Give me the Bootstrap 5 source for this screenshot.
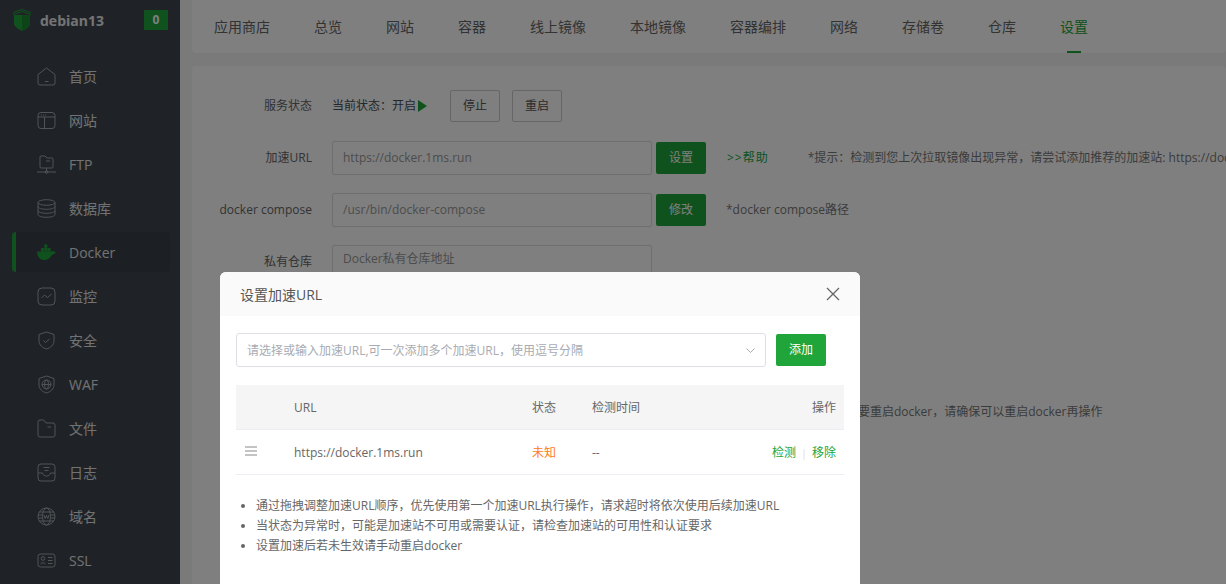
<!DOCTYPE html>
<html lang="zh-CN">
<head>
    <meta charset="UTF-8">
    <meta name="viewport" content="width=device-width, initial-scale=1">
    <title>Docker | debian13</title>
    <link href="https://cdn.jsdelivr.net/npm/bootstrap@5.3.0/dist/css/bootstrap.min.css" rel="stylesheet">
    <style>
        body {
            font-family: "Open Sans", "Noto Sans CJK SC", sans-serif;
            font-size: 12px;
            color: #555;
            background: #f5f5f5;
            overflow: hidden;
        }
        .app-wrap { height: 100vh; overflow: hidden; }
        .side-bar { width: 180px; background: #3e464e; color: #eee; }
        .side-head { height: 40px; margin-bottom: 16px; padding: 0 12px; }
        .side-name { font-weight: 700; font-size: 14px; color: #e8e8e8; }
        .side-badge {
            width: 24px; height: 20px; background: #20a53a; color: #fff; font-size: 12px;
            font-weight: 700; border-radius: 1px; line-height: 20px; text-align: center;
        }
        .side-item {
            height: 40px; margin: 0 10px 4px 12px; padding-left: 25px; gap: 13px;
            font-size: 14px; color: #e4e4e4; border-radius: 4px;
        }
        .side-item svg { width: 19px; height: 19px; fill: none; stroke: #a4a8ac; stroke-width: 1; flex-shrink: 0; }
        .side-item.on { background: #383f46; border-left: 4px solid #20a53a; padding-left: 21px; }
        .main-area { padding: 0 0 0 12px; min-width: 0; }
        .tab-strip { height: 53px; background: #fff; padding-left: 22px; gap: 44px; border-radius: 0 0 4px 4px; font-size: 14px; }
        .tab-link { position: relative; line-height: 53px; color: #666; white-space: nowrap; text-decoration: none; }
        .tab-link.on { color: #20a53a; }
        .tab-link.on::after {
            content: ""; position: absolute; left: 7px; bottom: 0; width: 14px; height: 2px; background: #20a53a;
        }
        .set-card { margin-top: 13px; background: #fff; border-radius: 4px; padding-top: 14px; height: 600px; }
        .set-row { height: 52px; white-space: nowrap; }
        .set-gap { height: 98px; }
        .set-row > * { flex-shrink: 0; }
        .set-label { width: 120px; text-align: right; margin-right: 20px; color: #666; }
        .set-input {
            width: 320px; height: 34px; border: 1px solid #ddd; border-radius: 2px; padding: 0 10px; color: #999;
            line-height: 32px; background: #fff;
        }
        .set-input-high { line-height: 26px; }
        .line-btn { width: 50px; height: 32px; padding: 0; border: 1px solid #ccc; border-radius: 2px; background: #fff; color: #555; font-size: 12px; }
        .stop-btn { margin-left: 23px; }
        .restart-btn { margin-left: 12px; }
        .fill-btn { width: 50px; height: 32px; background: #20a53a; color: #fff; border: 0; border-radius: 2px; font-size: 12px; padding: 0; }
        .help-link { color: #20a53a; text-decoration: none; font-size: 12px; margin-left: 21px; letter-spacing: 1px; }
        .note-text { color: #777; margin-left: 20px; font-size: 12px; }
        .note-hint { margin-left: 39px; }
        .note-far { margin-left: 666px; }
        .play-mark {
            display: inline-block; border-left: 9px solid #20a53a; border-top: 6px solid transparent; border-bottom: 6px solid transparent;
            vertical-align: -2px; margin-left: 2px;
        }
        .dim-layer { position: absolute; inset: 0; background: rgba(0, 0, 0, .5); }
        .url-dialog {
            position: absolute; left: 220px; top: 272px; width: 640px; height: 400px; background: #fff; border-radius: 6px; overflow: hidden;
        }
        .dialog-head { height: 44px; background: #fafafa; padding: 0 20px; font-size: 14px; color: #555; }
        .dialog-close { background: none; border: 0; padding: 0; line-height: 0; }
        .dialog-body { padding: 17px 16px; }
        .url-select {
            width: 530px; height: 34px; border: 1px solid #dcdfe6; border-radius: 3px; padding: 1px 10px 0; color: #a8abb2; font-size: 12px;
        }
        .add-btn { width: 50px; height: 32px; margin-left: 10px; background: #20a53a; color: #fff; border: 0; border-radius: 2px; font-size: 12px; padding: 0; }
        .url-table { width: 608px; margin: 18px 0 0; font-size: 12px; color: #666; border-collapse: collapse; table-layout: fixed; }
        .url-table th { height: 44px; background: #f5f5f5; font-weight: 400; padding: 2px 8px 0; border-bottom: 1px solid #ebeef5; }
        .url-table td { height: 45px; padding: 2px 8px 0; border-bottom: 1px solid #ebeef5; }
        .warn-text { color: #ff7a1a; }
        .act-link { color: #20a53a; text-decoration: none; font-size: 12px; }
        .act-sep { color: #ddd; margin: 0 5px; font-size: 11px; }
        .tip-list { margin: 21px 0 0; padding-left: 20px; font-size: 12px; line-height: 20px; color: #666; }
    </style>
</head>
<body>

<div class="app-wrap d-flex position-relative">
    <aside class="side-bar flex-shrink-0">
        <div class="side-head d-flex align-items-center">
            <svg width="20" height="22" viewBox="0 0 20 22" class="me-2">
                <path d="M2 6h16v9c0 2-3 4.500-8 7-5-2.500-8-5-8-7z" fill="#20a53a"/>
                <path d="M10 6h8v9c0 2-3 4.500-8 7z" fill="#1a8a30"/>
                <path d="M1 3.500 10 .5l9 3M1 5.500l9-3 9 3" fill="none" stroke="#20a53a"/>
            </svg>
            <span class="side-name flex-grow-1">debian13</span>
            <span class="side-badge">0</span>
        </div>
        <div class="side-item d-flex align-items-center">
            <svg viewBox="0 0 19 19"><path d="M1 7.500 9.500 1 18 7.500V16a2 2 0 0 1-2 2H3a2 2 0 0 1-2-2zM8 14.500h3.500"/></svg>首页
        </div>
        <div class="side-item d-flex align-items-center">
            <svg viewBox="0 0 19 19"><rect x="1" y="1.500" width="17" height="16" rx="3"/><path d="M1 6h17M7.500 6v11.500M4 4h1M6 4h1M8 4h1"/></svg>网站
        </div>
        <div class="side-item d-flex align-items-center">
            <svg viewBox="0 0 19 19"><path d="M3 12V2a1 1 0 0 1 1-1h4l2 2h5a1 1 0 0 1 1 1v8a1 1 0 0 1-1 1H4a1 1 0 0 1-1-1zM9 6h4M0 17h19M9.500 13v3"/><circle cx="9.500" cy="17" r="1.300"/></svg>FTP
        </div>
        <div class="side-item d-flex align-items-center">
            <svg viewBox="0 0 19 19"><ellipse cx="9.500" cy="3.500" rx="8.500" ry="2.800"/><path d="M1 3.500v12c0 1.600 3.800 2.800 8.500 2.800s8.500-1.200 8.500-2.800v-12M1 7.500c0 1.600 3.800 2.800 8.500 2.800s8.500-1.200 8.500-2.800M1 11.500c0 1.600 3.800 2.800 8.500 2.800s8.500-1.200 8.500-2.800"/></svg>数据库
        </div>
        <div class="side-item on d-flex align-items-center">
            <svg viewBox="0 0 19 19" style="stroke:none"><path d="M0 8.500h14c1-.5 3-.5 5 1-1.500 1.500-2.800 2-4 2.200-2 3.800-4.500 5.300-7.500 5.300C3 17 .3 14 0 8.500z" fill="#20a53a"/><path d="M4 5h3v3.500H4zM7.300 5h3v3.500h-3zM7.300 1.500h3v3.200h-3zM10.600 5h3v3.500h-3z" fill="#20a53a"/></svg>Docker
        </div>
        <div class="side-item d-flex align-items-center">
            <svg viewBox="0 0 19 19"><rect x="1" y="1" width="17" height="17" rx="4"/><path d="M4.500 11l3-3 3 2.500 4-3.500"/></svg>监控
        </div>
        <div class="side-item d-flex align-items-center">
            <svg viewBox="0 0 19 19"><path d="M9.500 1 17 3.500V10c0 4-3.500 6.800-7.500 8C5.500 16.800 2 14 2 10V3.500zM6.500 9.500l2 2 4-3.500"/></svg>安全
        </div>
        <div class="side-item d-flex align-items-center">
            <svg viewBox="0 0 19 19"><path d="M9.500 1 17 3.500V10c0 4-3.500 6.800-7.500 8C5.500 16.800 2 14 2 10V3.500z"/><circle cx="9.500" cy="9.500" r="4.500"/><ellipse cx="9.500" cy="9.500" rx="2" ry="4.500"/><path d="M5 9.500h9"/></svg>WAF
        </div>
        <div class="side-item d-flex align-items-center">
            <svg viewBox="0 0 19 19"><path d="M1 3a2 2 0 0 1 2-2h3.500l2.500 3h7a2 2 0 0 1 2 2v10a2 2 0 0 1-2 2H3a2 2 0 0 1-2-2zM10.500 8H14"/></svg>文件
        </div>
        <div class="side-item d-flex align-items-center">
            <svg viewBox="0 0 19 19"><rect x="1" y="1" width="17" height="17" rx="3"/><path d="M1 10h4.500c.5 2 2 3 4 3s3.500-1 4-3H18M6.500 4.500h6M7.500 7.500h4"/></svg>日志
        </div>
        <div class="side-item d-flex align-items-center">
            <svg viewBox="0 0 19 19"><circle cx="9.500" cy="9.500" r="8.500"/><ellipse cx="9.500" cy="9.500" rx="4" ry="8.500"/><path d="M2 5h15M2 14h15M1 8h4M14 8h4M1 11h4M14 11h4"/><path d="M7 8l1.200 3.500 1.300-3 1.300 3L12 8"/></svg>域名
        </div>
        <div class="side-item d-flex align-items-center">
            <svg viewBox="0 0 19 19"><rect x="1" y="3" width="17" height="13" rx="2.500"/><circle cx="6" cy="7.500" r="1.800"/><path d="M3.500 13c.5-1.500 4.500-1.500 5 0M11 6.500h4.500M11 9.500h4.500M11 12.500h4.500"/></svg>SSL
        </div>
    </aside>

    <main class="main-area flex-grow-1">
        <div class="tab-strip d-flex">
            <a class="tab-link">应用商店</a>
            <a class="tab-link">总览</a>
            <a class="tab-link">网站</a>
            <a class="tab-link">容器</a>
            <a class="tab-link">线上镜像</a>
            <a class="tab-link">本地镜像</a>
            <a class="tab-link">容器编排</a>
            <a class="tab-link">网络</a>
            <a class="tab-link">存储卷</a>
            <a class="tab-link">仓库</a>
            <a class="tab-link on">设置</a>
        </div>
        <div class="set-card">
            <div class="set-row d-flex align-items-center">
                <div class="set-label">服务状态</div>
                <span class="text-dark-emphasis">当前状态：开启<i class="play-mark"></i></span>
                <button class="line-btn stop-btn">停止</button>
                <button class="line-btn restart-btn">重启</button>
            </div>
            <div class="set-row d-flex align-items-center">
                <div class="set-label">加速URL</div>
                <div class="set-input">https://docker.1ms.run</div>
                <button class="fill-btn ms-1">设置</button>
                <a class="help-link">&gt;&gt;帮助</a>
                <span class="note-text note-hint">*提示：检测到您上次拉取镜像出现异常，请尝试添加推荐的加速站: https://docker.1ms.run</span>
            </div>
            <div class="set-row d-flex align-items-center">
                <div class="set-label">docker compose</div>
                <div class="set-input">/usr/bin/docker-compose</div>
                <button class="fill-btn ms-1">修改</button>
                <span class="note-text">*docker compose路径</span>
            </div>
            <div class="set-row d-flex align-items-center">
                <div class="set-label">私有仓库</div>
                <div class="set-input set-input-high">Docker私有仓库地址</div>
            </div>
            <div class="set-gap"></div>
            <div class="set-row d-flex align-items-center">
                <span class="note-text note-far">要重启docker，请确保可以重启docker再操作</span>
            </div>
        </div>
    </main>

    <div class="dim-layer"></div>

    <div class="url-dialog">
        <div class="dialog-head d-flex align-items-center justify-content-between">
            <span>设置加速URL</span>
            <button class="dialog-close" aria-label="关闭">
                <svg width="14" height="14" viewBox="0 0 14 14"><path d="M1 1l12 12M13 1 1 13" stroke="#666" stroke-width="1.300" fill="none"/></svg>
            </button>
        </div>
        <div class="dialog-body">
            <div class="d-flex align-items-center">
                <div class="url-select d-flex align-items-center justify-content-between">
                    <span>请选择或输入加速URL,可一次添加多个加速URL，使用逗号分隔</span>
                    <svg width="9" height="6" viewBox="0 0 9 6"><path d="M.5.500 4.500 4.500 8.500.500" stroke="#a8abb2" fill="none"/></svg>
                </div>
                <button class="add-btn">添加</button>
            </div>
            <table class="url-table">
                <colgroup><col style="width:50px"><col style="width:238px"><col style="width:60px"><col style="width:100px"><col></colgroup>
                <thead>
                    <tr><th></th><th>URL</th><th>状态</th><th>检测时间</th><th class="text-end">操作</th></tr>
                </thead>
                <tbody>
                    <tr>
                        <td class="ps-2"><svg width="14" height="10" viewBox="0 0 14 10" class="d-block mb-1"><path d="M1 1h12M1 5h12M1 9h12" stroke="#888" fill="none"/></svg></td>
                        <td>https://docker.1ms.run</td>
                        <td class="warn-text">未知</td>
                        <td>--</td>
                        <td class="text-end"><a class="act-link">检测</a><span class="act-sep">|</span><a class="act-link">移除</a></td>
                    </tr>
                </tbody>
            </table>
            <ul class="tip-list">
                <li>通过拖拽调整加速URL顺序，优先使用第一个加速URL执行操作，请求超时将依次使用后续加速URL</li>
                <li>当状态为异常时，可能是加速站不可用或需要认证，请检查加速站的可用性和认证要求</li>
                <li>设置加速后若未生效请手动重启docker</li>
            </ul>
        </div>
    </div>
</div>

<script src="https://cdn.jsdelivr.net/npm/bootstrap@5.3.0/dist/js/bootstrap.bundle.min.js"></script>
</body>
</html>
